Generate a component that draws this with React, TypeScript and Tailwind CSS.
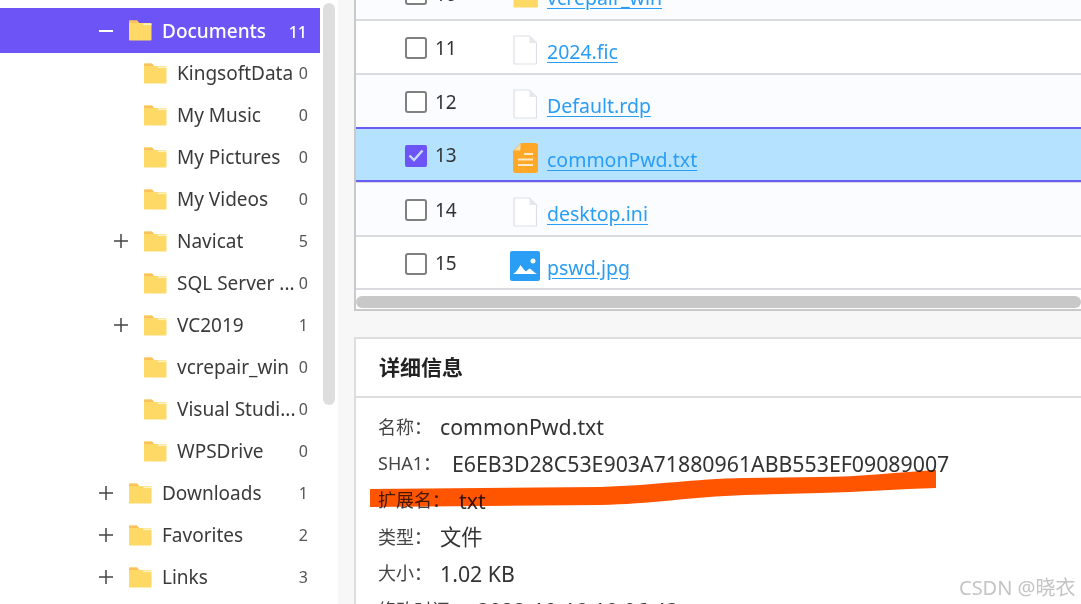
import React from 'react';

const font = "font-['Noto_Sans','Noto_Sans_CJK_SC',sans-serif]";

const FolderIcon = ({ big }: { big?: boolean }) => (
    <svg width={big ? 27 : 24} height={big ? 23 : 21} viewBox="0 0 24 21" className="shrink-0">
        <path d="M1 1.500C1 .8 1.600.5 2 .5h6.500c.6 0 1 .3 1.300.8L11 3h11.500c.6 0 1 .5 1 1v15.500c0 .6-.5 1-1 1H2c-.6 0-1-.4-1-1z" fill="#ffd966" />
        <path d="M9 .5 11 3H2c-.6 0-1 .3-1 1V1.500C1 .8 1.600.5 2 .5z" fill="#fdc25e" />
        <rect x="15" y="3.500" width="8.500" height="1.600" fill="#fff3c8" />
    </svg>
);

const PlusIcon = () => (
    <svg width="14" height="14" viewBox="0 0 14 14">
        <path d="M0 7h14M7 0v14" stroke="#444" strokeWidth="1.500" />
    </svg>
);

const BlankFile = () => (
    <svg width="24" height="30" viewBox="0 0 24 30" className="shrink-0">
        <path d="M1 1h15.500L23.500 8v20c0 .6-.4 1-1 1H2c-.6 0-1-.4-1-1z" fill="#fff" stroke="#dcdfe6" strokeWidth="1.200" />
        <path d="M16.500 1v7h7z" fill="#e6e8ee" />
    </svg>
);

const TextFile = () => (
    <svg width="25" height="30" viewBox="0 0 25 30" className="shrink-0">
        <path d="M8 0h14.500c1.400 0 2.500 1.100 2.500 2.500v25c0 1.400-1.100 2.500-2.500 2.500h-20C1.100 30 0 28.900 0 27.500V8z" fill="#ffa726" />
        <path d="M1 7.500 7.500 1v5c0 .8-.7 1.500-1.500 1.500z" fill="#ffd9a0" />
        <rect x="11" y="10" width="9" height="2" fill="#ffe9c6" />
        <rect x="5" y="15.500" width="15" height="2" fill="#ffe9c6" />
        <rect x="5" y="21" width="15" height="2" fill="#ffe9c6" />
    </svg>
);

const ImageFile = () => (
    <svg width="30" height="30" viewBox="0 0 30 30" className="shrink-0">
        <rect width="30" height="30" rx="2" fill="#2a9df4" />
        <circle cx="23" cy="10" r="2.500" fill="#fff" />
        <path d="M3 23c2.500-1 5-4.500 7.500-9 2 3 3.500 5 5.500 6.500 1.500-1.500 2.500-2.500 4-3 2 1.500 4 4 7 5.500z" fill="#fff" />
    </svg>
);

const treeRows = [
    { name: 'KingsoftData', count: 0, level: 2 },
    { name: 'My Music', count: 0, level: 2 },
    { name: 'My Pictures', count: 0, level: 2 },
    { name: 'My Videos', count: 0, level: 2 },
    { name: 'Navicat', count: 5, level: 2, plus: true },
    { name: 'SQL Server ...', count: 0, level: 2 },
    { name: 'VC2019', count: 1, level: 2, plus: true },
    { name: 'vcrepair_win', count: 0, level: 2 },
    { name: 'Visual Studi...', count: 0, level: 2 },
    { name: 'WPSDrive', count: 0, level: 2 },
    { name: 'Downloads', count: 1, level: 1, plus: true },
    { name: 'Favorites', count: 2, level: 1, plus: true },
    { name: 'Links', count: 3, level: 1, plus: true },
];

const Sidebar = () => (
    <div className="relative w-[338px] h-full shrink-0 bg-white pt-2">
        <div className="flex items-center w-[320px] h-[45px] bg-[#6c54f6] text-white text-[19px] font-medium">
            <span className="ml-[99px] w-[14px] h-[2px] bg-white" />
            <span className="ml-[15px]"><FolderIcon /></span>
            <span className="ml-[10px] flex-1 mt-[2px]">Documents</span>
            <span className="mr-[13px] text-[16px] mt-[2px]">11</span>
        </div>
        <div className="-mt-[1px]">
            {treeRows.map((r) => (
                <div key={r.name} className="flex items-center h-[42px] w-[320px] text-[19px] text-[#3a3a3a]">
                    <span className={r.level === 2 ? 'w-[129px] shrink-0 flex justify-end pr-[1px]' : 'w-[114px] shrink-0 flex justify-end pr-[1px]'}>
                        {r.plus && <PlusIcon />}
                    </span>
                    <span className="ml-[14px]"><FolderIcon /></span>
                    <span className="ml-[10px] flex-1 min-w-0 whitespace-nowrap overflow-hidden">{r.name}</span>
                    <span className="mr-[12px] ml-[2px] text-[16px] text-[#555]">{r.count}</span>
                </div>
            ))}
        </div>
        {/* tree scrollbar */}
        <div className="absolute left-[323px] top-[3px] w-[12px] h-[402px] rounded-md bg-[#dedede]" />
    </div>
);

const fileRows = [
    { no: 10, name: 'vcrepair_win', icon: <FolderIcon big />, cls: 'h-[54px] bg-[#fbfcff] border-[#d9dbdf]' },
    { no: 11, name: '2024.fic', icon: <BlankFile />, cls: 'h-[54px] bg-white border-[#d9dbdf]' },
    { no: 12, name: 'Default.rdp', icon: <BlankFile />, cls: 'h-[54px] bg-[#fbfcff] border-[#d9dbdf]' },
    { no: 13, name: 'commonPwd.txt', icon: <TextFile />, selected: true, cls: 'h-[55px] -mt-[2px] mb-[1px] bg-[#b5e3ff] border-t-2 border-[#6c5cf6] shadow-[0_1px_0_#d9dbdf]' },
    { no: 14, name: 'desktop.ini', icon: <BlankFile />, cls: 'h-[54px] bg-[#fbfcff] border-[#d9dbdf]' },
    { no: 15, name: 'pswd.jpg', icon: <ImageFile />, cls: 'h-[53px] bg-white border-[#d9dbdf]' },
];

const FileRow = ({ no, name, icon, selected, cls }: { no: number; name: string; icon: React.ReactNode; selected?: boolean; cls: string }) => (
    <div className={'relative flex items-center pl-[49px] border-b-2 ' + cls}>
        {selected ? (
            <span className="w-[22px] h-[22px] rounded-[2px] bg-[#6c54f6] flex items-center justify-center mt-[2px] shrink-0">
                <svg width="16" height="13" viewBox="0 0 16 13"><path d="M1.500 6.500 6 11l8.500-9.500" fill="none" stroke="#c8dcff" strokeWidth="2.400" /></svg>
            </span>
        ) : (
            <span className="w-[22px] h-[22px] rounded-[3px] border-[2.5px] border-[#808080] bg-white mt-[2px] shrink-0" />
        )}
        <span className="ml-[8px] w-[75px] text-[#333] mt-[2px] shrink-0 text-[19px]">{no}</span>
        <span className="w-[30px] flex justify-center shrink-0 mt-[6px]">{icon}</span>
        <span className="text-[#2a9df4] text-[19.5px] underline underline-offset-[3px] ml-[7px] mt-[10px]">{name}</span>
    </div>
);

const details = [
    { label: '名称：', value: 'commonPwd.txt', gap: 'w-[62px]', h: 'h-[36px]' },
    { label: 'SHA1：', value: 'E6EB3D28C53E903A71880961ABB553EF09089007', gap: 'w-[74px]', h: 'h-[37px]' },
    { label: '扩展名：', value: 'txt', gap: 'w-[81px]', h: 'h-[37px]' },
    { label: '类型：', value: '文件', gap: 'w-[62px]', h: 'h-[36px]' },
    { label: '大小：', value: '1.02 KB', gap: 'w-[62px]', h: 'h-[37px]' },
    { label: '修改时间：', value: '2022-10-18 10:06:43', gap: 'w-[99px]', h: 'h-[37px]' },
];

export default function App() {
    return (
        <div className={'relative flex w-[1081px] h-[604px] overflow-hidden bg-[#f7f7f7] ' + font}>
            <Sidebar />
            <div className="flex-1 min-w-0 pl-[16px]">
                <div className="h-[311px] border-l-2 border-b-2 border-[#c9c9c9] bg-white overflow-hidden">
                    <div className="-mt-[33px]">
                        {fileRows.map((r) => (
                            <FileRow key={r.no} no={r.no} name={r.name} icon={r.icon} selected={r.selected} cls={r.cls} />
                        ))}
                    </div>
                    <div className="mt-[6px] h-[12px] rounded-md bg-[#c8c8c8]" />
                </div>
                <div className="mt-[26px] h-[300px] border-l-2 border-t-2 border-[#dedede] bg-white">
                    <div className="h-[59px] flex items-center pl-[23px] border-b-2 border-[#dedede] text-[21px] font-bold text-[#222]">详细信息</div>
                    <div className="pl-[22px] pt-[11px]">
                        {details.map((d) => (
                            <div key={d.label} className={'flex items-center ' + d.h}>
                                <span className={'text-[18px] text-[#444] shrink-0 whitespace-nowrap ' + d.gap}>{d.label}</span>
                                <span className="text-[21.3px] text-[#333] whitespace-nowrap">{d.value}</span>
                            </div>
                        ))}
                    </div>
                </div>
            </div>
            {/* redaction scribble */}
            <svg className="absolute left-0 top-0 pointer-events-none mix-blend-multiply" width="1081" height="604" viewBox="0 0 1081 604">
                <path d="M370 489 600 487C660 485 690 479 745 478L820 477C860 477 900 472 936 470V488C900 489 860 492 820 493L745 495C690 497 650 504 600 505L370 507Z" fill="#ff5500" />
            </svg>
            <div className="absolute left-[959px] top-[573px] text-[20px] text-[#c4c4c4] whitespace-nowrap">CSDN @晓衣</div>
        </div>
    );
}
